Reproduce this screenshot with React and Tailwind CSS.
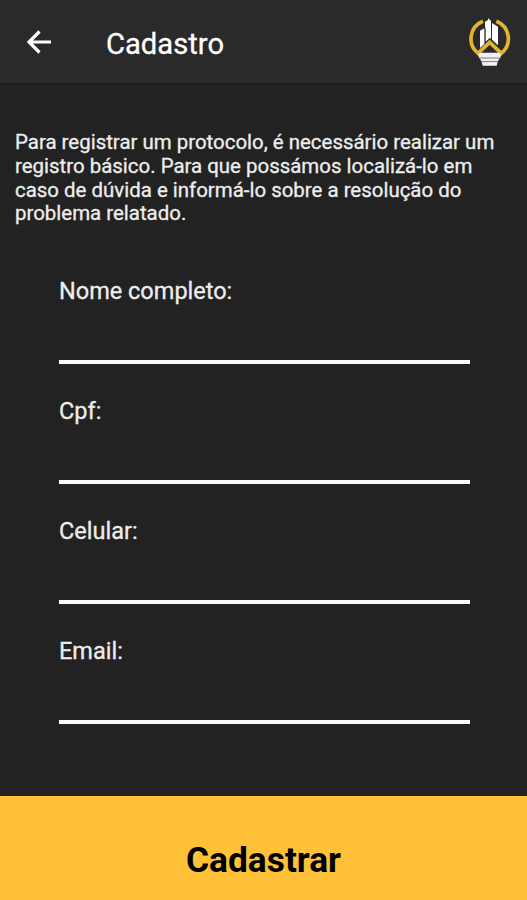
import React, { useState } from "react";

const fields = [
  { name: "nome", label: "Nome completo:", type: "text" },
  { name: "cpf", label: "Cpf:", type: "text" },
  { name: "celular", label: "Celular:", type: "tel" },
  { name: "email", label: "Email:", type: "email" },
];

const Logo = () => (
  <svg className="w-[46px] h-[50px]" viewBox="36 36 138 150" fill="none">
    {/* Ring */}
    <path
      d="M84 49 A56 56 0 0 0 69 145 L104 112 L139 145 A56 56 0 0 0 124 49"
      stroke="#e3b42c"
      strokeWidth="11"
    />
    {/* Buildings */}
    <path
      d="M75 77 L88 70 V117 L75 129 Z M90 50 L98 46 L101 39 L104 45 L108 47 V101 L104 99 L92 110 V68 L90 67 Z M111 54 L129 65 V121 L111 104 Z"
      fill="#fff"
    />
    {/* Bulb base */}
    <path
      d="M69 149 L76 143 H132 L139 149 L136 158 H72 Z M74 160 H134 L129 169 H79 Z M80 171 H128 L125 182 H83 Z"
      fill="#f1f1f1"
    />
    <path d="M72 159 H136 M79 170 H129" stroke="#aaa" strokeWidth="2" />
  </svg>
);

const App = () => {
  const [form, setForm] = useState({ nome: "", cpf: "", celular: "", email: "" });

  return (
    <div className="flex flex-col h-[900px] w-[527px] overflow-hidden bg-[#222222] text-[#ededed] font-['Roboto',sans-serif]">
      {/* Header */}
      <header className="flex items-center h-[85px] shrink-0 bg-[#2a2a2a] border-b-2 border-[#1d1d1d] pl-[26px] pr-[14px]">
        <button type="button" aria-label="Voltar">
          <svg className="w-[26px] h-6" viewBox="0 0 26 24" fill="none">
            <path d="M25 12 H3 M13.5 1.5 L3 12 L13.5 22.5" stroke="#fff" strokeWidth="3.2" />
          </svg>
        </button>
        <h1 className="ml-[54px] mt-1 text-[29.2px] leading-8 text-white [-webkit-text-stroke:0.3px]">
          Cadastro
        </h1>
        <div className="ml-auto">
          <Logo />
        </div>
      </header>

      <p className="mt-[46px] pl-[15px] text-[20.46px] leading-[23.8px] whitespace-nowrap [-webkit-text-stroke:0.3px]">
        Para registrar um protocolo, é necessário realizar um
        <br />
        registro básico. Para que possámos localizá-lo em
        <br />
        caso de dúvida e informá-lo sobre a resolução do
        <br />
        problema relatado.
      </p>

      {/* Form */}
      <form className="flex flex-col grow mt-[51px]">
        <div className="flex flex-col pl-[59px] pr-[57px]">
          {fields.map((field) => (
            <label
              key={field.name}
              className="flex flex-col h-[119.8px] text-[23.5px] leading-7 [-webkit-text-stroke:0.3px]"
            >
              <span>{field.label}</span>
              <input
                className="h-[59px] w-full bg-transparent border-b-4 border-[#fafafa] outline-none"
                type={field.type}
                value={form[field.name]}
                onChange={(e) => setForm({ ...form, [field.name]: e.target.value })}
              />
            </label>
          ))}
        </div>

        <button
          type="button"
          className="mt-auto h-[104px] pt-[23px] shrink-0 bg-[#fec137] text-black text-[35.3px] leading-10 font-bold"
        >
          Cadastrar
        </button>
      </form>
    </div>
  );
};

export default App;
